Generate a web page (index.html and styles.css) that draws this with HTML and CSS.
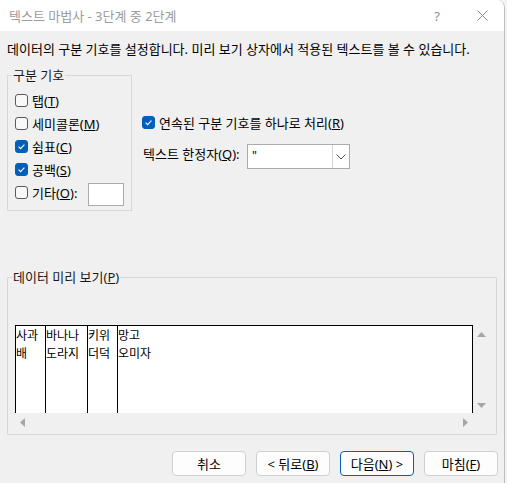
FILE: index.html
```html
<!DOCTYPE html>
<html lang="ko">
<head>
<meta charset="utf-8">
<title>텍스트 마법사</title>
<link rel="stylesheet" href="styles.css">
</head>
<body>
<div class="window">
  <div class="titlebar">
    <span class="title">텍스트 마법사 - 3단계 중 2단계</span>
    <span class="help">?</span>
    <span class="close"><svg width="11" height="11" viewBox="0 0 11 11"><path d="M0.5 0.5L10.5 10.5M10.5 0.5L0.5 10.5" stroke="#8c8c8c" stroke-width="1" fill="none"/></svg></span>
  </div>
  <div class="content">
    <p class="desc">데이터의 구분 기호를 설정합니다. 미리 보기 상자에서 적용된 텍스트를 볼 수 있습니다.</p>
    <div class="top-row">
      <fieldset class="group delims">
        <legend>구분 기호</legend>
        <div class="check"><span class="box"></span><span>탭(<u>T</u>)</span></div>
        <div class="check"><span class="box"></span><span>세미콜론(<u>M</u>)</span></div>
        <div class="check"><span class="box on"><svg width="9" height="9" viewBox="0 0 9 9"><path d="M1.6 4.7L3.6 6.6L7.4 2.6" stroke="#fff" stroke-width="1.1" fill="none"/></svg></span><span>쉼표(<u>C</u>)</span></div>
        <div class="check"><span class="box on"><svg width="9" height="9" viewBox="0 0 9 9"><path d="M1.6 4.7L3.6 6.6L7.4 2.6" stroke="#fff" stroke-width="1.1" fill="none"/></svg></span><span>공백(<u>S</u>)</span></div>
        <div class="check other"><span class="box"></span><span>기타(<u>O</u>):</span><span class="textbox"></span></div>
      </fieldset>
      <div class="options">
        <div class="check single"><span class="box on"><svg width="9" height="9" viewBox="0 0 9 9"><path d="M1.6 4.7L3.6 6.6L7.4 2.6" stroke="#fff" stroke-width="1.1" fill="none"/></svg></span><span>연속된 구분 기호를 하나로 처리(<u>R</u>)</span></div>
        <div class="qualifier">
          <span class="qlabel">텍스트 한정자(<u>Q</u>):</span>
          <div class="combo">
            <span class="combo-value">"</span>
            <span class="combo-btn"><svg width="10" height="6" viewBox="0 0 10 6"><path d="M0.5 0.5L5 5L9.5 0.5" stroke="#555" stroke-width="1" fill="none"/></svg></span>
          </div>
        </div>
      </div>
    </div>
    <fieldset class="group preview-group">
      <legend>데이터 미리 보기(<u>P</u>)</legend>
      <div class="preview">
        <div class="sheet">
          <div class="col c1"><div>사과</div><div>배</div></div>
          <div class="col c2"><div>바나나</div><div>도라지</div></div>
          <div class="col c3"><div>키위</div><div>더덕</div></div>
          <div class="col c4"><div>망고</div><div>오미자</div></div>
        </div>
        <div class="vscroll">
          <svg width="9" height="5" viewBox="0 0 9 5"><path d="M0 5L4.5 0L9 5Z" fill="#a6a6a6"/></svg>
          <svg width="9" height="5" viewBox="0 0 9 5"><path d="M0 0L4.5 5L9 0Z" fill="#a6a6a6"/></svg>
        </div>
        <div class="hscroll">
          <svg width="5" height="9" viewBox="0 0 5 9"><path d="M5 0L0 4.5L5 9Z" fill="#a6a6a6"/></svg>
          <svg width="5" height="9" viewBox="0 0 5 9"><path d="M0 0L5 4.5L0 9Z" fill="#a6a6a6"/></svg>
        </div>
      </div>
    </fieldset>
    <div class="buttons">
      <button class="btn">취소</button>
      <button class="btn">&lt; 뒤로(<u>B</u>)</button>
      <button class="btn default">다음(<u>N</u>) &gt;</button>
      <button class="btn">마침(<u>F</u>)</button>
    </div>
  </div>
</div>
</body>
</html>
```

FILE: styles.css
```css
html, body {
  margin: 0;
  padding: 0;
}

body {
  background: #f4f4f4;
  font-family: "Noto Sans", "Noto Sans CJK KR", sans-serif;
  font-size: 13px;
  color: #000;
}

.window {
  width: 504px;
  height: 483px;
  border-right: 1px solid #bdbdbd;
  border-top-right-radius: 8px;
  background: #f0f0f0;
  overflow: hidden;
}

.titlebar {
  height: 31px;
  background: #fff;
  display: flex;
  align-items: center;
}

.title {
  flex: 1;
  padding-left: 9px;
  color: #9c9c9c;
  line-height: 16px;
}

.help {
  width: 46px;
  text-align: center;
  color: #8c8c8c;
  font-size: 13px;
  line-height: 16px;
}

.close {
  width: 44px;
  display: flex;
  justify-content: center;
  align-items: center;
}

.content {
  padding: 10px 6px 0 7px;
}

.desc {
  margin: 0;
  line-height: 16px;
  white-space: nowrap;
}

.top-row {
  display: flex;
  gap: 10px;
  margin-top: 10px;
}

.group {
  margin: 0;
  min-width: 0;
  border: 1px solid #d7d7d7;
  box-sizing: border-box;
}

.group legend {
  margin-left: -3px;
  padding: 0 1px;
  line-height: 16px;
  color: #1a1a1a;
}

.delims {
  width: 125px;
  padding: 6px 7px 6px 7px;
}

.check {
  display: flex;
  align-items: center;
  gap: 4px;
  height: 23px;
  white-space: nowrap;
}

.box {
  width: 13px;
  height: 13px;
  flex: none;
  box-sizing: border-box;
  border: 1px solid #5a5a5a;
  border-radius: 3px;
  background: #f8f8f8;
}

.box.on {
  background: #005fb8;
  border-color: #005fb8;
  display: flex;
  align-items: center;
  justify-content: center;
}

.other .textbox {
  margin-left: auto;
  margin-top: 4px;
  width: 36px;
  height: 23px;
  box-sizing: border-box;
  border: 1px solid #ababab;
  background: #fff;
}

.options {
  padding-top: 45px;
}

.check.single {
  height: 20px;
}

.qualifier {
  display: flex;
  align-items: center;
  margin-top: 12px;
  padding-left: 1px;
}

.qlabel {
  width: 104px;
  padding-bottom: 6px;
  white-space: nowrap;
}

.combo {
  width: 103px;
  height: 25px;
  box-sizing: border-box;
  border: 1px solid #ababab;
  background: #fff;
  display: flex;
}

.combo-value {
  flex: 1;
  padding-left: 4px;
  line-height: 22px;
  font-size: 12px;
}

.combo-btn {
  width: 16px;
  border-left: 1px solid #d4d4d4;
  display: flex;
  align-items: center;
  justify-content: center;
}

.preview-group {
  width: 490px;
  margin-top: 58px;
  padding: 40px 7px 4px 7px;
}

.preview {
  display: grid;
  grid-template-columns: 458px 16px;
  grid-template-rows: 88px 17px;
}

.sheet {
  display: flex;
  background: #fff;
  border: 1px solid #000;
  border-bottom: none;
  font-family: "Noto Sans CJK KR", sans-serif;
  font-size: 12px;
  line-height: 18px;
  color: #000;
}

.col {
  border-right: 1px solid #000;
  white-space: nowrap;
  overflow: hidden;
}

.c1 { width: 29px; }
.c2 { width: 41px; }
.c3 { width: 29px; }
.c4 { flex: 1; border-right: none; }

.vscroll {
  display: flex;
  flex-direction: column;
  justify-content: space-between;
  align-items: center;
  padding: 7px 0 5px;
}

.hscroll {
  display: flex;
  justify-content: space-between;
  align-items: flex-start;
  padding: 5px 5px 0 5px;
}

.buttons {
  display: flex;
  justify-content: flex-end;
  gap: 10px;
  margin-top: 16px;
}

.btn {
  width: 74px;
  height: 25px;
  box-sizing: border-box;
  border: 1px solid #d0d0d0;
  border-radius: 4px;
  background: #fdfdfd;
  font-family: inherit;
  font-size: 13px;
  color: #000;
  padding: 0;
  display: flex;
  align-items: center;
  justify-content: center;
  white-space: nowrap;
}

.btn.default {
  border-color: #005fb8;
}
```
